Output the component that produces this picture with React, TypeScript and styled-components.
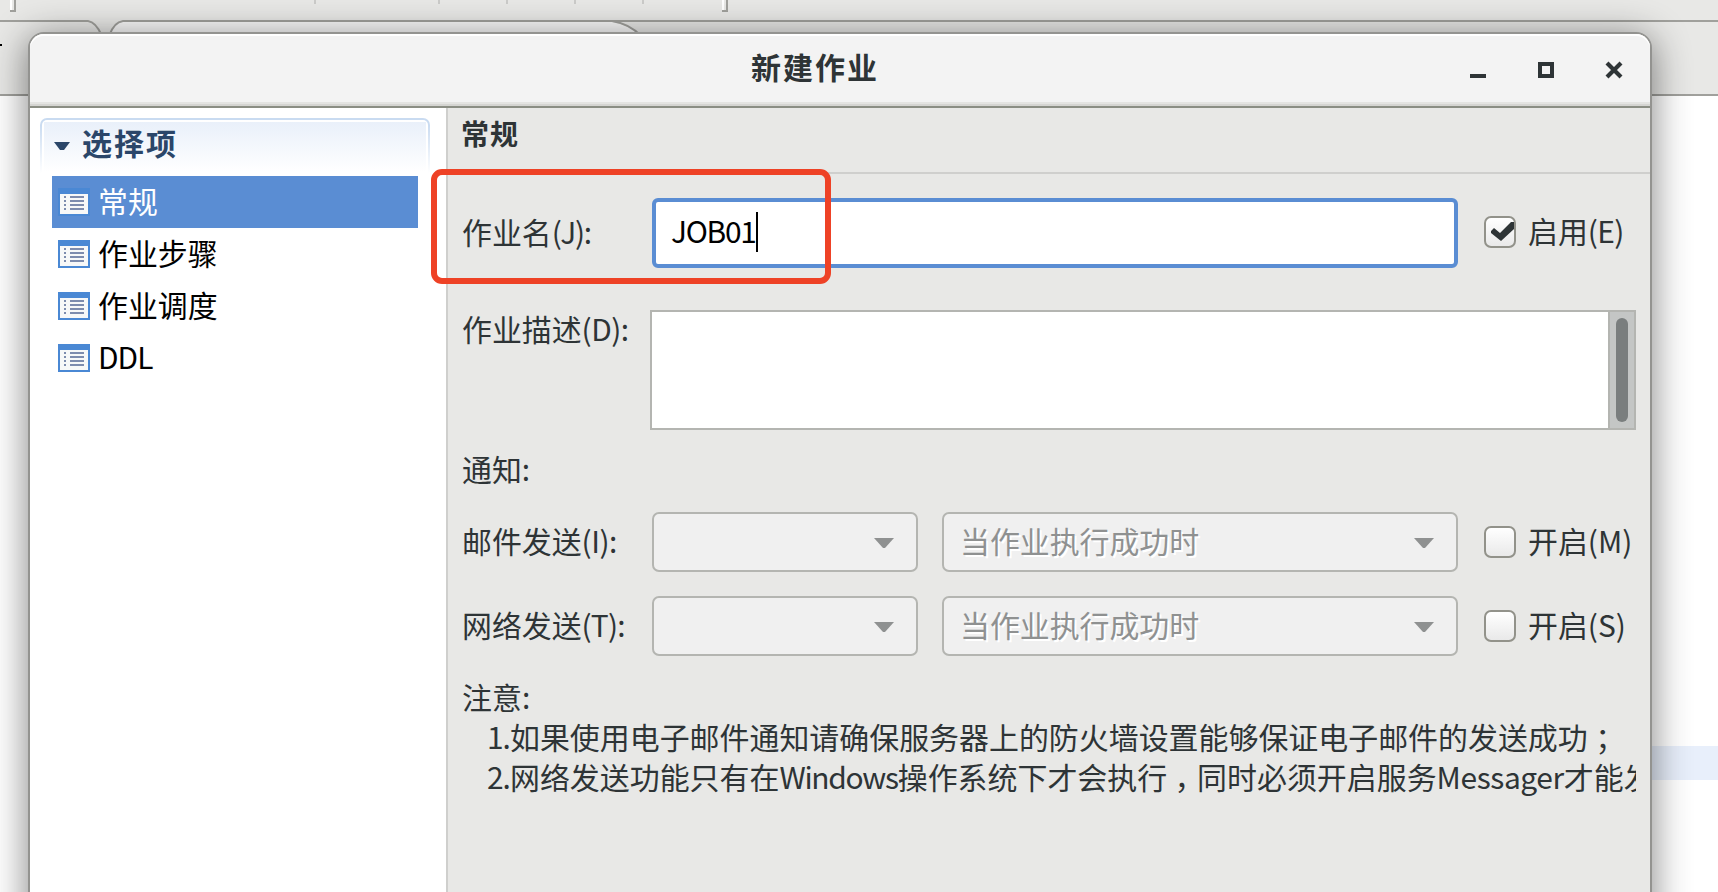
import { ReactNode } from 'react';
import styled, { createGlobalStyle, css, ThemeProvider } from 'styled-components';

const theme = {
  surface: '#e8e8e6',
  text: '#2e3436',
  accent: '#5a8dd3',
  border: '#b4b5b1',
  divider: '#cfcfcd',
  frame: '#939390',
  muted: '#8f9191',
  font: '"Noto Sans CJK SC", sans-serif'
};

const GlobalStyle = createGlobalStyle`
  * {
    box-sizing: border-box;
  }

  body {
    margin: 0;
    overflow: hidden;
    background: #fff;
    color: ${theme.text};
    font-family: ${theme.font};
    font-size: 29.9px;
    line-height: 40px;
  }
`;

const Desktop = styled.div`
  position: relative;
  width: 1718px;
  height: 892px;
  overflow: hidden;
  background: #fff;
`;

const Editor = styled.div`
  display: flex;
  flex-direction: column;
  height: 892px;
`;

const ToolbarArt = styled.svg`
  display: block;
  flex: none;
  background: ${({ theme: t }) => t.surface};
`;

const EditorBody = styled.div`
  display: flex;
  flex: 1;
  flex-direction: column;
  padding: 650px 0 0 100px;
`;

const CurrentLine = styled.div`
  height: 34px;
  background: #e8effb;
`;

const Dialog = styled.div`
  position: absolute;
  top: 32px;
  left: 28px;
  display: flex;
  flex-direction: column;
  width: 1624px;
  height: 940px;
  border: 2px solid ${({ theme: t }) => t.frame};
  border-radius: 16px 16px 0 0;
  background: ${({ theme: t }) => t.surface};
  box-shadow: 0 6px 36px 2px rgba(0, 0, 0, 0.46);
`;

const TitleBar = styled.div`
  display: flex;
  flex: none;
  align-items: center;
  height: 74px;
  padding: 0 26px 8px 0;
  border-bottom: 2px solid #8b8e84;
  border-radius: 14px 14px 0 0;
  background: #f3f3f3;
  box-shadow: inset 0 2px #fff, inset 0 -2px #d5d5d2, inset 0 -4px #e4e4e2;
`;

const Title = styled.div`
  flex: 1;
  padding-left: 721px;
  font-size: 30px;
  font-weight: 700;
  letter-spacing: 2px;
`;

const WindowButtons = styled.div`
  display: flex;
  gap: 48px;
  padding-top: 8px;

  svg {
    width: 20px;
    height: 20px;
  }
`;

const Content = styled.div`
  display: flex;
  flex: 1;
  min-height: 0;
`;

const Sidebar = styled.div`
  width: 418px;
  padding: 10px 16px 0 10px;
  border-right: 2px solid ${({ theme: t }) => t.divider};
  background: #fff;
`;

const SectionFrame = styled.div`
  height: 58px;
  padding: 2px 2px 0;
  border-radius: 7px 7px 0 0;
  background: linear-gradient(#c9dbf1 10%, #fff 95%);
`;

const SectionInner = styled.div`
  height: 56px;
  padding: 2px 2px 0;
  border-radius: 5px 5px 0 0;
  background: #fff;
`;

const SectionHeader = styled.div`
  display: flex;
  align-items: center;
  gap: 12px;
  height: 50px;
  padding: 0 0 2px 10px;
  background: linear-gradient(#e9f0fa, #fff);
  color: #2b4669;
  font-weight: 700;
  font-size: 30px;
  letter-spacing: 2px;
`;

// keeps the glyphs slightly above the middle of a centred row
const Text = styled.span<{ $lift?: number }>`
  padding-bottom: ${({ $lift = 4 }) => $lift}px;
`;

const NavItem = styled.div<{ $active?: boolean }>`
  display: flex;
  align-items: center;
  gap: 8px;
  width: 366px;
  height: 52px;
  margin-left: 12px;
  padding-left: 6px;
  color: #000;

  ${({ $active }) => $active && css`
    background: ${theme.accent};
    color: #fff;
  `}
`;

const Panel = styled.div`
  flex: 1;
  min-width: 0;
`;

const PanelTitle = styled.div`
  height: 66px;
  padding: 5px 0 0 13px;
  border-bottom: 2px solid ${({ theme: t }) => t.divider};
  font-weight: 700;
  font-size: 28px;
  letter-spacing: 1px;
`;

const Form = styled.div`
  padding: 24px 14px 0 14px;
`;

const FormRow = styled.div<{ $height: number; $after: number; $top?: boolean }>`
  display: flex;
  align-items: ${({ $top }) => ($top ? 'flex-start' : 'center')};
  height: ${({ $height }) => $height}px;
  margin-bottom: ${({ $after }) => $after}px;
  white-space: nowrap;
`;

const Label = styled.div<{ $width?: number }>`
  flex: none;
  width: ${({ $width = 190 }) => $width}px;
  padding-bottom: 5px;
`;

const TextField = styled.div`
  display: flex;
  align-items: center;
  width: 806px;
  height: 70px;
  padding: 0 0 7px 15px;
  border: 4px solid ${({ theme: t }) => t.accent};
  border-radius: 6px;
  background: #fff;
  color: #000;
`;

const Caret = styled.span`
  width: 2px;
  height: 40px;
  margin-top: 5px;
  background: #000;
`;

const TextArea = styled.div`
  display: flex;
  justify-content: flex-end;
  width: 986px;
  height: 120px;
  margin-top: 2px;
  border: 2px solid ${({ theme: t }) => t.border};
  background: #fff;
`;

const ScrollTrack = styled.div`
  width: 26px;
  padding: 6px;
  border-left: 2px solid ${({ theme: t }) => t.border};
  background: #c4c6c5;
`;

const ScrollThumb = styled.div`
  width: 12px;
  height: 104px;
  border-radius: 6px;
  background: #7a7e7e;
`;

const Combo = styled.div<{ $width: number }>`
  display: flex;
  align-items: center;
  justify-content: space-between;
  width: ${({ $width }) => $width}px;
  height: 60px;
  margin-right: 24px;
  padding: 0 22px 0 16px;
  border: 2px solid ${({ theme: t }) => t.border};
  border-radius: 7px;
  background: #f0f0f0;
  color: ${({ theme: t }) => t.muted};
  text-shadow: 2px 2px #fff;

  svg {
    margin-top: 2px;
  }
`;

const CheckLabel = styled.div`
  display: flex;
  align-items: center;
  gap: 12px;
  margin: -2px 0 0 26px;

  ${Combo} + & {
    margin: 0 0 0 2px;
  }
`;

const CheckBox = styled.div`
  flex: none;
  width: 32px;
  height: 32px;
  border: 2px solid #92928a;
  border-radius: 7px;
  background: linear-gradient(#fff, #e9e9e9);

  svg {
    display: block;
  }
`;

const Notes = styled.div`
  overflow: hidden;
  font-size: 29.95px;
  white-space: nowrap;
`;

const NoteLine = styled.div`
  padding-left: 25px;
`;

// half-width mark centred in a full-width cell
const Mark = styled.span`
  margin: 0 0.25em;
  font-feature-settings: "halt";
`;

const Latin = styled.span<{ $spacing: number }>`
  letter-spacing: ${({ $spacing }) => $spacing}px;
`;

const Highlight = styled.div`
  position: absolute;
  top: 169px;
  left: 431px;
  width: 400px;
  height: 115px;
  border: 6px solid #ee4226;
  border-radius: 11px;
`;

const ListIcon = () => (
  <svg width="32" height="28" shapeRendering="crispEdges">
    <rect width="32" height="28" fill="#4a88d4" />
    <rect x="2" y="6" width="28" height="20" fill="#f7f8f8" />
    {[8, 12, 16, 20].map((y) => (
      <g key={y} fill="#7d8cae">
        <rect x="6" y={y} width="2" height="2" />
        <rect x="12" y={y} width="14" height="2" />
      </g>
    ))}
  </svg>
);

const Arrow = () => (
  <svg width="20" height="10">
    <path d="M0 0H20L11 10H9Z" fill={theme.muted} />
  </svg>
);

const Check = ({ checked, children }: { checked?: boolean; children: ReactNode }) => (
  <CheckLabel>
    <CheckBox>
      {checked && (
        <svg width="28" height="28">
          <path d="M5 13L8 10L14 15L25 4H28V11L15 23L5 15Z" fill={theme.text} />
        </svg>
      )}
    </CheckBox>
    <Text>{children}</Text>
  </CheckLabel>
);

const Toolbar = () => (
  <ToolbarArt width="1718" height="96" fill="none">
    <path d="M122 22H612Q628 24 641 36H109Q113 24 122 22Z" fill="#fafafa" />
    <path d="M0 21H88Q96 22 102 36M109 36Q114 22 123 21H1718M612 21Q630 24 641 36" stroke="#a0a09c" strokeWidth="2" />
    <path d="M0 95H1718" stroke="#a0a09c" strokeWidth="2" />
    {[315, 439, 507, 575, 643].map((x) => (
      <path key={x} d={`M${x} 0V4`} stroke="#cbcbc9" strokeWidth="2" />
    ))}
    {[10, 722].map((x) => (
      <g key={x}>
        <path d={`M${x + 1} 0V10`} stroke="#fff" strokeWidth="2" />
        <path d={`M${x} 11H${x + 5}V0`} stroke="#a0a09c" strokeWidth="2" />
      </g>
    ))}
    <path d="M0 45H2" stroke="#000" strokeWidth="2" />
  </ToolbarArt>
);

const navItems = ['常规', '作业步骤', '作业调度', 'DDL'];

const notifications = [
  { label: '邮件发送', accessKey: '(I):', toggle: '(M)', spacing: -0.5, after: 24 },
  { label: '网络发送', accessKey: '(T):', toggle: '(S)', spacing: -0.8, after: 20 }
];

const App = (): JSX.Element => (
  <ThemeProvider theme={theme}>
    <GlobalStyle />
    <Desktop>
      <Editor>
        <Toolbar />
        <EditorBody>
          <CurrentLine />
        </EditorBody>
      </Editor>
      <Dialog>
        <TitleBar>
          <Title>新建作业</Title>
          <WindowButtons>
            <svg><path d="M2 16H18" stroke={theme.text} strokeWidth="4" /></svg>
            <svg><path d="M4 4H16V16H4Z" fill="none" stroke={theme.text} strokeWidth="4" /></svg>
            <svg><path d="M3 3L17 17M17 3L3 17" stroke={theme.text} strokeWidth="4.2" /></svg>
          </WindowButtons>
        </TitleBar>
        <Content>
          <Sidebar>
            <SectionFrame>
              <SectionInner>
                <SectionHeader>
                  <svg width="16" height="8"><path d="M0 0H16L10 8H6Z" fill="#2b4669" /></svg>
                  <Text $lift={8}>选择项</Text>
                </SectionHeader>
              </SectionInner>
            </SectionFrame>
            {navItems.map((item, i) => (
              <NavItem key={item} $active={i === 0}>
                <ListIcon />
                <Text>
                  <Latin $spacing={item === 'DDL' ? -1 : 0}>{item}</Latin>
                </Text>
              </NavItem>
            ))}
          </Sidebar>
          <Panel>
            <PanelTitle>常规</PanelTitle>
            <Form>
              <FormRow $height={70} $after={40}>
                <Label>
                  作业名
                  <Latin $spacing={-1.4}>(J):</Latin>
                </Label>
                <TextField>
                  <Latin $spacing={-1.3}>JOB01</Latin>
                  <Caret />
                </TextField>
                <Check checked>
                  启用
                  <Latin $spacing={-0.6}>(E)</Latin>
                </Check>
              </FormRow>
              <FormRow $height={122} $after={18} $top>
                <Label $width={188}>
                  作业描述
                  <Latin $spacing={-0.5}>(D):</Latin>
                </Label>
                <TextArea>
                  <ScrollTrack>
                    <ScrollThumb />
                  </ScrollTrack>
                </TextArea>
              </FormRow>
              <FormRow $height={40} $after={24}>通知:</FormRow>
              {notifications.map(({ label, accessKey, toggle, spacing, after }) => (
                <FormRow key={label} $height={60} $after={after}>
                  <Label>
                    {label}
                    <Latin $spacing={spacing}>{accessKey}</Latin>
                  </Label>
                  <Combo $width={266}>
                    <span />
                    <Arrow />
                  </Combo>
                  <Combo $width={516}>
                    <Text>当作业执行成功时</Text>
                    <Arrow />
                  </Combo>
                  <Check>
                    开启
                    {toggle}
                  </Check>
                </FormRow>
              ))}
              <Notes>
                注意:
                <NoteLine>
                  <Latin $spacing={-1}>1.</Latin>
                  如果使用电子邮件通知请确保服务器上的防火墙设置能够保证电子邮件的发送成功
                  <Mark>；</Mark>
                </NoteLine>
                <NoteLine>
                  <Latin $spacing={-1}>2.</Latin>
                  网络发送功能只有在
                  <Latin $spacing={-1.3}>Windows</Latin>
                  操作系统下才会执行
                  <Mark>，</Mark>
                  同时必须开启服务
                  <Latin $spacing={-0.4}>Messager</Latin>
                  才能发
                </NoteLine>
              </Notes>
            </Form>
          </Panel>
        </Content>
      </Dialog>
      <Highlight />
    </Desktop>
  </ThemeProvider>
);

export default App;
